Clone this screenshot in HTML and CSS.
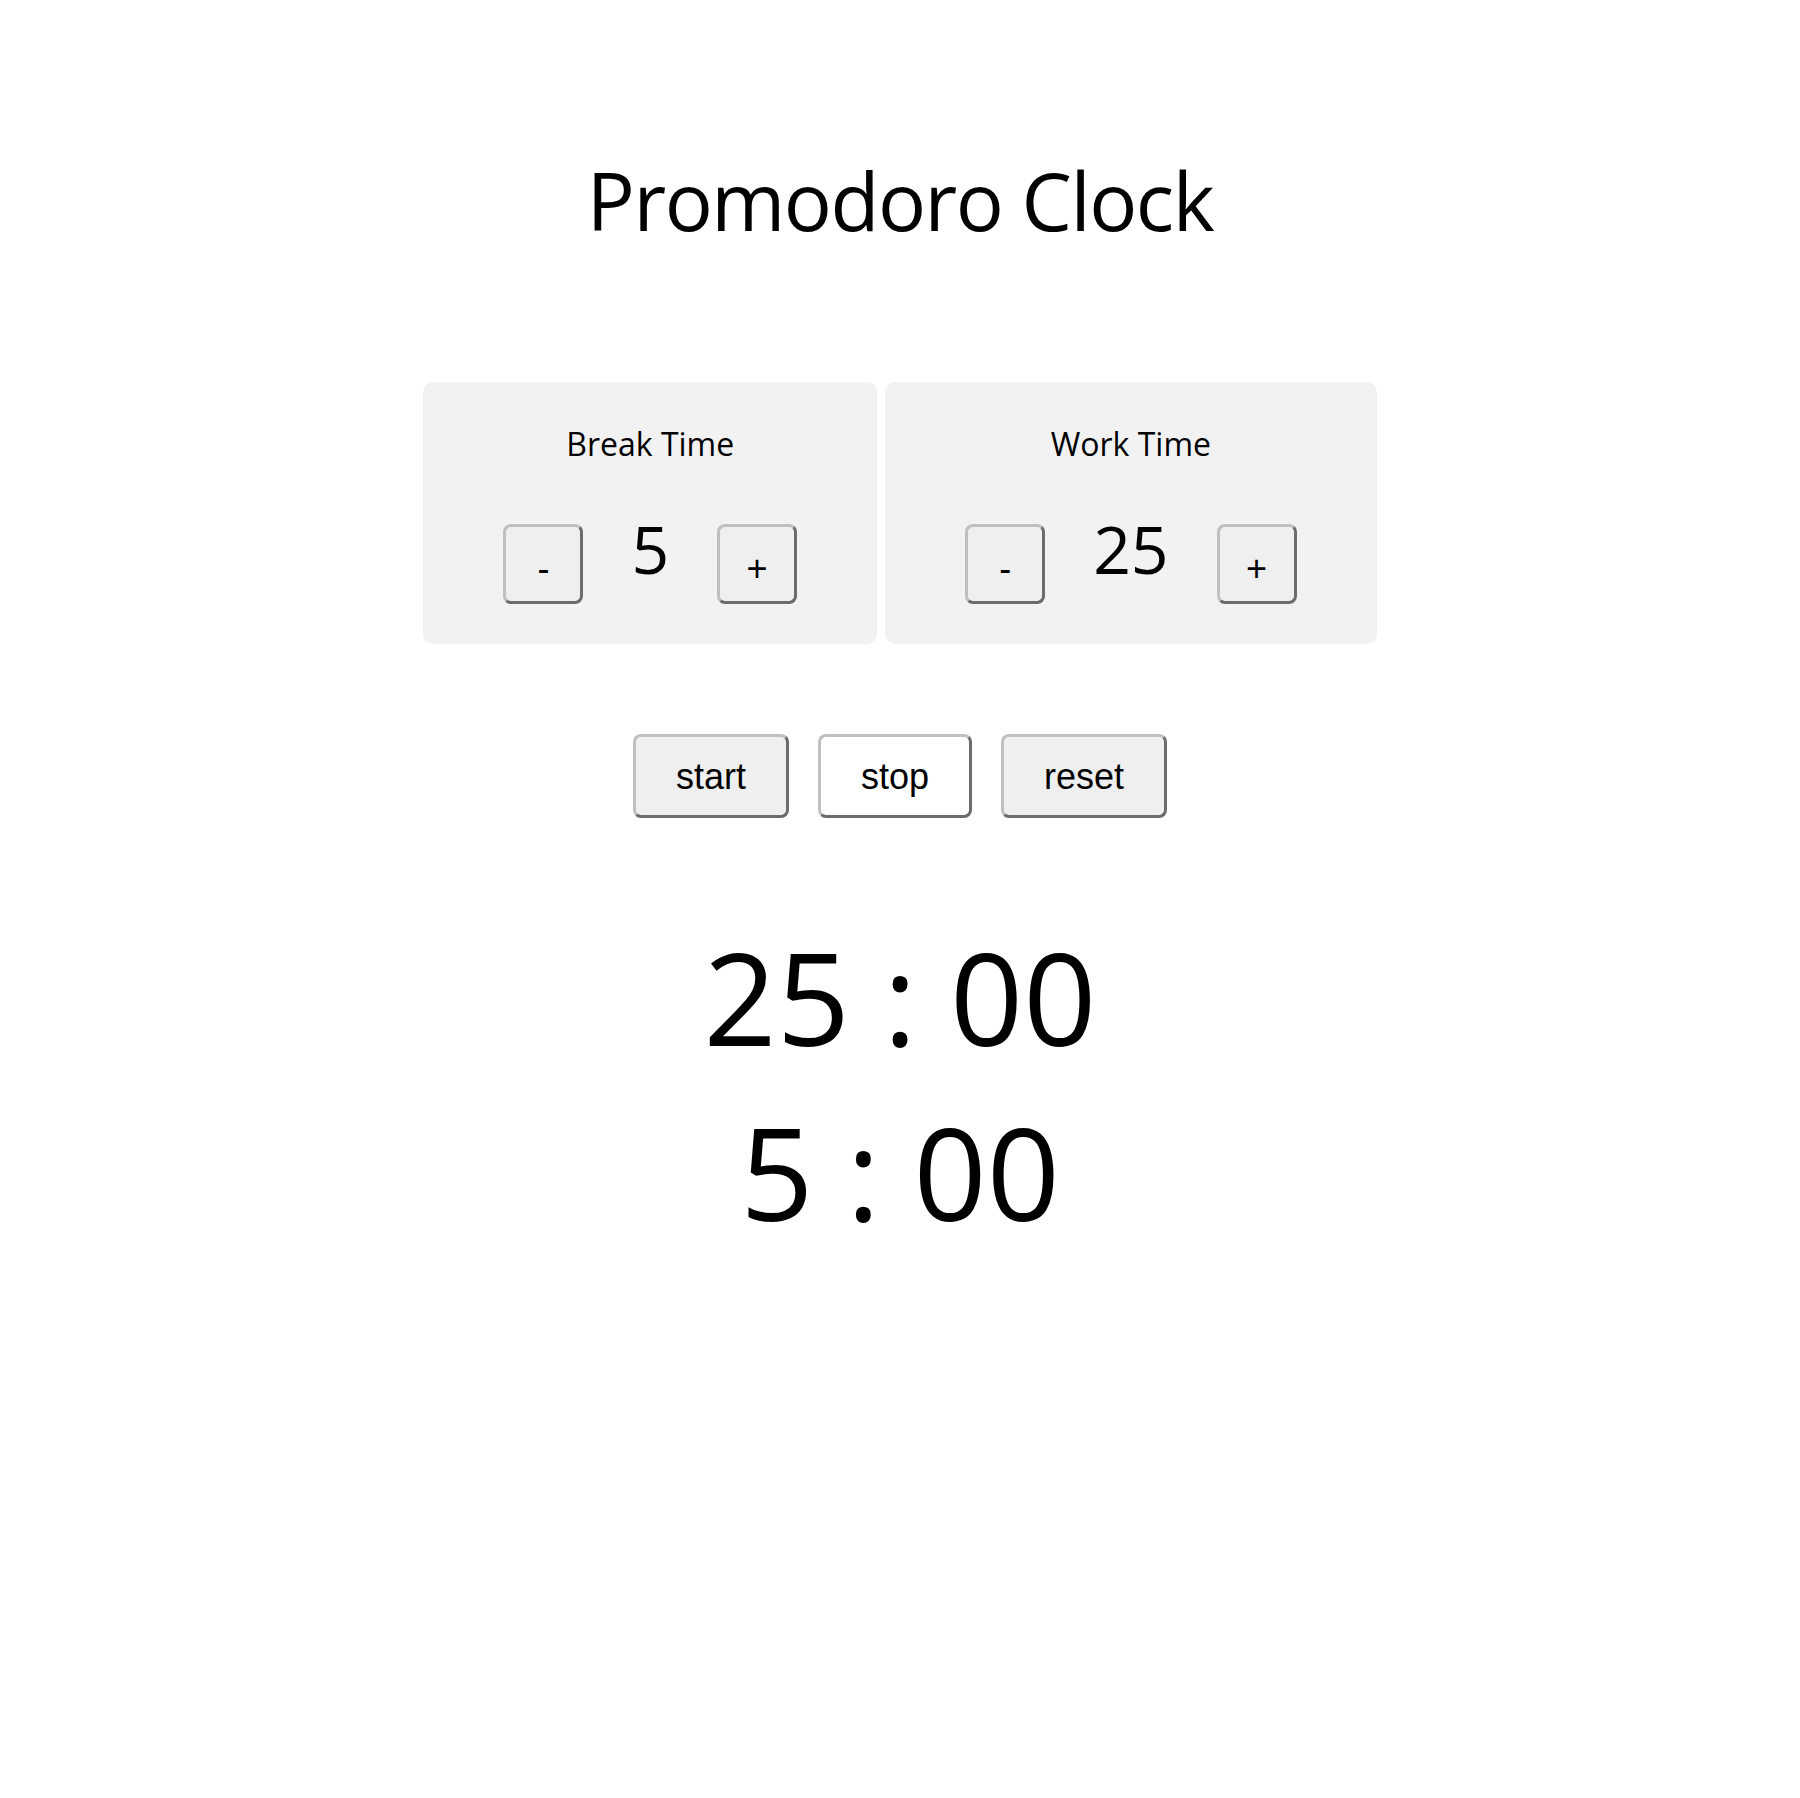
FILE: index.html
```html
<!DOCTYPE html>
<html lang="en">
<head>
<meta charset="utf-8">
<title>Promodoro Clock</title>
<link rel="stylesheet" href="styles.css">
</head>
<body>
<main class="app">
  <h1 class="title">Promodoro Clock</h1>
  <section class="settings">
    <div class="card">
      <h2 class="card-label">Break Time</h2>
      <div class="stepper">
        <button class="btn btn-square" type="button">-</button>
        <span class="value">5</span>
        <button class="btn btn-square" type="button">+</button>
      </div>
    </div>
    <div class="card">
      <h2 class="card-label">Work Time</h2>
      <div class="stepper">
        <button class="btn btn-square" type="button">-</button>
        <span class="value">25</span>
        <button class="btn btn-square" type="button">+</button>
      </div>
    </div>
  </section>
  <section class="controls">
    <button class="btn btn-wide" type="button">start</button>
    <button class="btn btn-wide btn-white" type="button">stop</button>
    <button class="btn btn-wide" type="button">reset</button>
  </section>
  <section class="timers">
    <div class="timer">25 : 00</div>
    <div class="timer">5 : 00</div>
  </section>
</main>
</body>
</html>
```
FILE: styles.css
```css
html, body {
  margin: 0;
  padding: 0;
  background: #ffffff;
}

body {
  font-family: "Open Sans", "Noto Sans", sans-serif;
  color: #000000;
}

.app {
  display: flex;
  flex-direction: column;
  align-items: center;
}

.title {
  margin: 145px 0 0;
  font-size: 80px;
  font-weight: 400;
  line-height: normal;
  letter-spacing: -1.5px;
}

.settings {
  display: flex;
  gap: 8px;
  margin-top: 128px;
}

.card {
  background: #f2f2f2;
  border-radius: 10px;
  padding: 40px 80px 40px;
  display: flex;
  flex-direction: column;
  align-items: center;
}

.card-label {
  margin: 0;
  font-size: 32px;
  font-weight: 400;
  line-height: normal;
}

.stepper {
  display: flex;
  align-items: flex-start;
  margin-top: 38px;
}

.value {
  font-size: 66px;
  line-height: normal;
  margin: 0 48px;
}

.btn {
  box-sizing: border-box;
  font-family: "Liberation Sans", Arial, sans-serif;
  font-size: 36px;
  line-height: normal;
  color: #000000;
  background: #efefef;
  border-style: solid;
  border-width: 3px;
  border-color: #c0c0c0 #6c6c6c #6c6c6c #c0c0c0;
  border-radius: 8px;
  margin: 0;
}

.btn-square {
  width: 80px;
  height: 80px;
  padding: 9px 0 0;
  margin-top: 21px;
}

.controls {
  display: flex;
  gap: 29px;
  margin-top: 90px;
}

.btn-wide {
  padding: 19px 40px 17px;
}

.btn-white {
  background: #ffffff;
}

.timers {
  margin-top: 91px;
  display: flex;
  flex-direction: column;
  align-items: center;
}

.timer {
  font-size: 128px;
  line-height: normal;
}
```
